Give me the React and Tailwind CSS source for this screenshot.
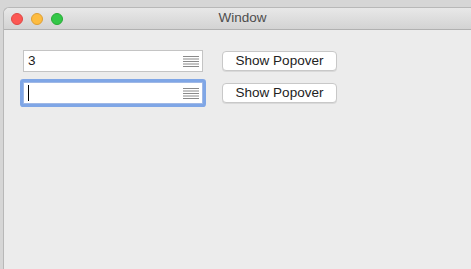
function MenuLines() {
  return (
    <svg width="16" height="12" viewBox="0 0 16 12" className="shrink-0">
      {[1.5, 4, 6.5, 9, 11.5].map(y => (
        <line key={y} x1="0" x2="16" y1={y} y2={y} stroke="#8a8a8a" strokeWidth="1" />
      ))}
    </svg>
  );
}

function Field({ value, focused }) {
  return (
    <div
      className={`w-[180px] h-[22px] flex items-center bg-white pl-[4px] pr-[3px] ${
        focused
          ? 'border border-[#9fb8e6] ring-[3px] ring-[#7fa6e6] rounded-[1px]'
          : 'border border-[#c4c4c4]'
      }`}
    >
      <span className="flex-1 text-[13.5px] text-[#222] leading-none">
        {value}
        {focused && <span className="inline-block w-px h-[16px] bg-black align-middle" />}
      </span>
      <MenuLines />
    </div>
  );
}

function PushButton() {
  return (
    <button className="w-[115px] h-[20px] bg-white border border-[#c8c8c8] rounded-[4px] text-[13.5px] text-[#222] leading-none shadow-[0_1px_0_rgba(0,0,0,0.08)]">
      Show Popover
    </button>
  );
}

export default function App() {
  return (
    <div
      className="w-[471px] h-[269px] bg-[#d6d6d6] pl-[3px] pt-[7px] overflow-hidden"
      style={{ fontFamily: '"Helvetica Neue", "Liberation Sans", Arial, sans-serif' }}
    >
      <div className="h-full bg-[#ececec] rounded-tl-[6px] border-l border-t border-[#b8b8b8] flex flex-col">
        {/* Title bar */}
        <div className="h-[22px] shrink-0 bg-gradient-to-b from-[#e8e8e8] to-[#d3d3d3] border-b border-[#b1b1b1] rounded-tl-[6px] flex items-center relative">
          <div className="flex gap-[8px] pl-[7px]">
            <span className="w-[12px] h-[12px] rounded-full bg-[#fc5753] border border-[#df4744]" />
            <span className="w-[12px] h-[12px] rounded-full bg-[#fdbc40] border border-[#de9f34]" />
            <span className="w-[12px] h-[12px] rounded-full bg-[#33c748] border border-[#27aa35]" />
          </div>
          <div className="absolute inset-0 flex items-center justify-center pl-[10px] text-[13.5px] text-[#4d4d4d]">
            Window
          </div>
        </div>

        {/* Content */}
        <div className="flex flex-col gap-[8px] pl-[19px] pt-[20px]">
          <div className="flex items-center gap-[19px]">
            <Field value="3" />
            <PushButton />
          </div>
          <div className="flex items-center gap-[19px] mt-[2px]">
            <Field value="" focused />
            <PushButton />
          </div>
        </div>
      </div>
    </div>
  );
}
